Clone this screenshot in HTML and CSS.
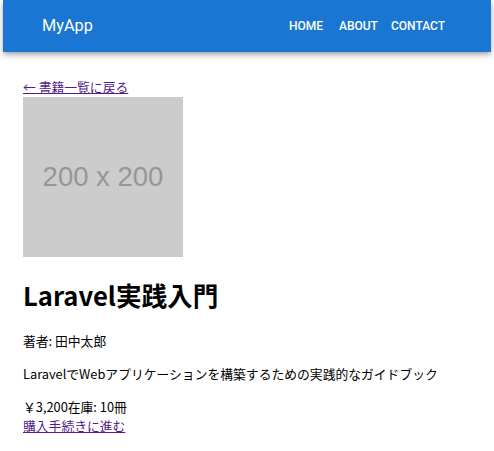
FILE: index.html
```html
<!DOCTYPE html>
<html lang="ja">
<head>
<meta charset="utf-8">
<title>Laravel実践入門</title>
<link rel="stylesheet" href="styles.css">
</head>
<body>
<header class="appbar">
  <div class="brand">MyApp</div>
  <nav class="nav">
    <a class="nav-btn nav-home" href="#">Home</a>
    <a class="nav-btn" href="#">About</a>
    <a class="nav-btn" href="#">Contact</a>
  </nav>
</header>
<main class="content">
  <div class="back-row"><a class="link" href="#">← 書籍一覧に戻る</a></div>
  <div class="cover-row"><div class="cover"><span>200 x 200</span></div></div>
  <h1 class="title">Laravel実践入門</h1>
  <p class="para">著者: 田中太郎</p>
  <p class="para">LaravelでWebアプリケーションを構築するための実践的なガイドブック</p>
  <p class="para price"><span>￥3,200</span><span>在庫: 10冊</span><br><a class="link" href="#">購入手続きに進む</a></p>
</main>
</body>
</html>
```
FILE: styles.css
```css
html, body {
  margin: 0;
  padding: 0;
  background: #fff;
}
body {
  font-family: "Noto Sans CJK JP", "Noto Sans", sans-serif;
  font-size: 12.8px;
  line-height: 1.6;
  color: #000;
}
.appbar {
  margin: 0 3px;
  height: 52px;
  background: #1976d2;
  color: #fff;
  display: flex;
  align-items: center;
  justify-content: space-between;
  padding: 0 46px 0 39px;
  box-shadow: 0 2px 4px -1px rgba(0,0,0,.2), 0 4px 5px 0 rgba(0,0,0,.14), 0 1px 10px 0 rgba(0,0,0,.12);
}
.brand {
  font-family: Roboto, "Liberation Sans", sans-serif;
  font-size: 16.3px;
  font-weight: 400;
  line-height: 20px;
}
.nav {
  display: flex;
  align-items: center;
  gap: 13px;
}
.nav-btn {
  font-family: Roboto, "Liberation Sans", sans-serif;
  font-size: 12px;
  font-weight: 500;
  text-transform: uppercase;
  color: #fff;
  text-decoration: none;
  line-height: 20px;
}
.nav-home {
  margin-right: 3px;
}
.content {
  padding: 25px 23px 0 23px;
}
.link {
  color: #551a8b;
  text-decoration: underline;
}
.cover {
  display: inline-flex;
  width: 160px;
  height: 160px;
  background: #cccccc;
  align-items: center;
  justify-content: center;
  vertical-align: baseline;
}
.cover span {
  font-family: "Liberation Sans", Arial, sans-serif;
  font-size: 27.5px;
  color: #969696;
  line-height: normal;
}
.title {
  font-size: 25.6px;
  font-weight: 700;
  margin: 19px 0 16px;
  line-height: 1.5;
}
.para {
  margin: 12.8px 0;
}
.price {
  margin-top: 13.5px;
  margin-bottom: 0;
  line-height: 1.45;
}
```
